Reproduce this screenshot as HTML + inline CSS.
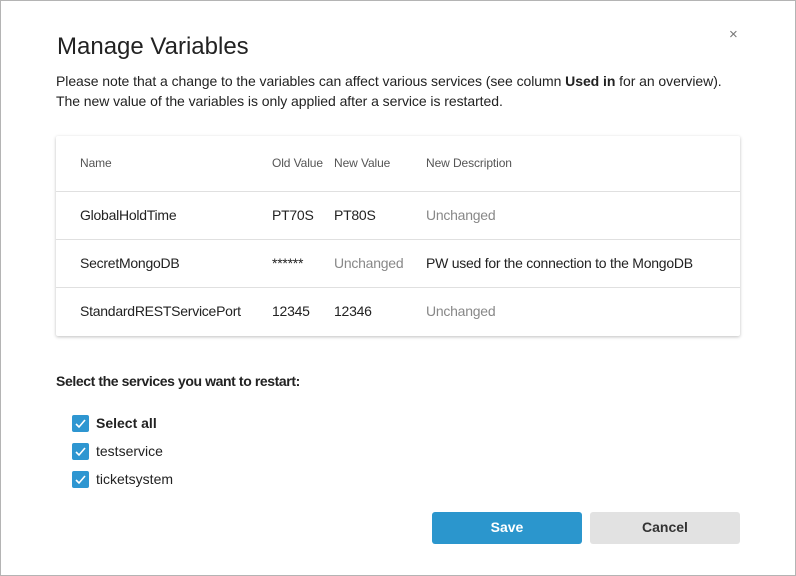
<!DOCTYPE html>
<html><head><meta charset="utf-8"><style>
*{margin:0;padding:0;box-sizing:border-box}
body{width:796px;height:576px;overflow:hidden;background:#fff;font-family:"Liberation Sans",sans-serif;color:#222;position:relative}
.frame{position:absolute;left:0;top:0;width:796px;height:576px;border:1px solid #b4b4b4}
.a{position:absolute;white-space:nowrap}
h1{position:absolute;left:57px;top:33px;font-size:24px;font-weight:normal;color:#222}
.p{font-size:14px;color:#222;letter-spacing:-0.06px}
.card{position:absolute;left:56px;top:136px;width:684px;height:200px;background:#fff;box-shadow:0 1px 3px rgba(0,0,0,.25);border-radius:2px}
.th{font-size:12px;color:#555;letter-spacing:-0.1px}
.td{font-size:14px;color:#222;letter-spacing:-0.25px}
.g{color:#888}
.line{position:absolute;left:0;width:684px;height:1px;background:#e0e0e0}
.cb{position:absolute;left:72px;width:17px;height:17px;background:#2e96d1;border-radius:2px}
.cb svg{position:absolute;left:2px;top:3px}
.btn{position:absolute;top:512px;width:150px;height:32px;border-radius:3px;font-size:14px;text-align:center;line-height:31px}
</style></head><body>
<div class="frame"></div>
<h1>Manage Variables</h1>
<div class="a" style="left:729px;top:26px;font-size:15px;color:#777">×</div>
<div class="a p" style="left:56px;top:73px">Please note that a change to the variables can affect various services (see column <b>Used in</b> for an overview).</div>
<div class="a p" style="left:56px;top:93px">The new value of the variables is only applied after a service is restarted.</div>
<div class="card">
<div class="a th" style="left:24px;top:20px">Name</div>
<div class="a th" style="left:216px;top:20px">Old Value</div>
<div class="a th" style="left:278px;top:20px">New Value</div>
<div class="a th" style="left:370px;top:20px">New Description</div>
<div class="line" style="top:55px"></div>
<div class="a td" style="left:24px;top:71px">GlobalHoldTime</div>
<div class="a td" style="left:216px;top:71px">PT70S</div>
<div class="a td" style="left:278px;top:71px">PT80S</div>
<div class="a td g" style="left:370px;top:71px">Unchanged</div>
<div class="line" style="top:103px"></div>
<div class="a td" style="left:24px;top:119px">SecretMongoDB</div>
<div class="a td" style="left:216px;top:119px">******</div>
<div class="a td g" style="left:278px;top:119px">Unchanged</div>
<div class="a td" style="left:370px;top:119px">PW used for the connection to the MongoDB</div>
<div class="line" style="top:151px"></div>
<div class="a td" style="left:24px;top:167px">StandardRESTServicePort</div>
<div class="a td" style="left:216px;top:167px">12345</div>
<div class="a td" style="left:278px;top:167px">12346</div>
<div class="a td g" style="left:370px;top:167px">Unchanged</div>
</div>
<div class="a" style="left:56px;top:373px;font-size:14px;font-weight:bold;color:#222;letter-spacing:-0.4px">Select the services you want to restart:</div>
<div class="cb" style="top:415px"><svg width="13" height="11" viewBox="0 0 13 11"><path d="M2 6l3 3 6-7" stroke="#fff" stroke-width="1.6" fill="none"/></svg></div>
<div class="a" style="left:96px;top:415px;font-size:14px;font-weight:bold">Select all</div>
<div class="cb" style="top:443px"><svg width="13" height="11" viewBox="0 0 13 11"><path d="M2 6l3 3 6-7" stroke="#fff" stroke-width="1.6" fill="none"/></svg></div>
<div class="a" style="left:96px;top:443px;font-size:14px">testservice</div>
<div class="cb" style="top:471px"><svg width="13" height="11" viewBox="0 0 13 11"><path d="M2 6l3 3 6-7" stroke="#fff" stroke-width="1.6" fill="none"/></svg></div>
<div class="a" style="left:96px;top:471px;font-size:14px">ticketsystem</div>
<div class="btn" style="left:432px;background:#2b96cd;color:#fff;font-weight:bold">Save</div>
<div class="btn" style="left:590px;background:#e2e2e2;color:#333;font-weight:bold">Cancel</div>
</body></html>
